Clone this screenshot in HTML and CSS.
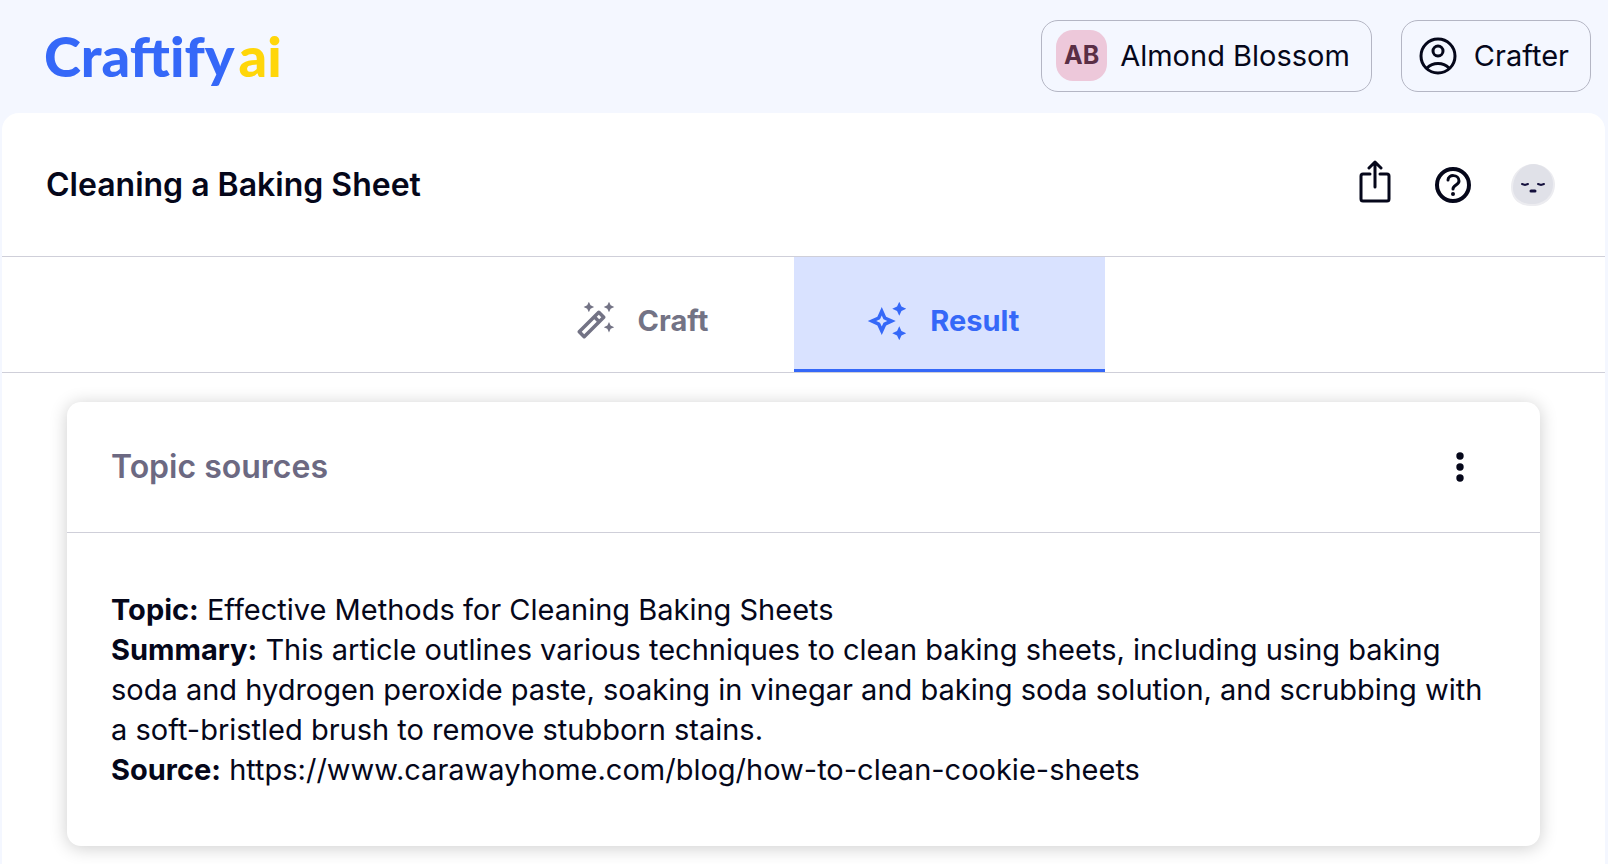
FILE: index.html
```html
<!DOCTYPE html>
<html lang="en">

<head>
<meta charset="UTF-8">
<meta name="viewport" content="width=device-width, initial-scale=1">
<title>Craftify ai</title>

<link rel="stylesheet" href="styles.css">

</head>

<body>

<header class="topbar">
    <a class="logo" href="#">Craftify<span class="logo-ai">ai</span></a>
    <div class="topbar-actions">
        <button class="chip" type="button">
            <span class="chip-badge">AB</span>
            <span>Almond Blossom</span>
        </button>
        <button class="chip chip-user" type="button">
            <svg class="chip-icon" viewBox="0 0 38 38" fill="none" stroke="currentColor" stroke-width="3">
                <circle cx="19" cy="19" r="17"/>
                <circle cx="19" cy="14" r="5"/>
                <path d="M8 31 C14 25 24 25 30 31"/>
            </svg>
            <span>Crafter</span>
        </button>
    </div>
</header>

<main class="panel">
    <div class="panel-head">
        <h1 class="title">Cleaning a Baking Sheet</h1>
        <div class="panel-tools">
            <button class="tool" type="button" aria-label="Share">
                <svg width="37" height="50" viewBox="0 0 37 50" fill="none" stroke="currentColor" stroke-width="3" stroke-linecap="round" stroke-linejoin="round">
                    <path d="M11 14 H4 Q2 14 2 16 V39 Q2 41 4 41 H28 Q30 41 30 39 V16 Q30 14 28 14 H21"/>
                    <path d="M16 27 V2 M10 8 L16 2 L22 8"/>
                </svg>
            </button>
            <button class="tool" type="button" aria-label="Help">
                <svg width="38" height="38" viewBox="0 0 38 38" fill="none" stroke="currentColor" stroke-width="4" stroke-linecap="round">
                    <circle cx="19" cy="19" r="16"/>
                    <path stroke-width="3" d="M14 14 C14 8 25 8 25 15 C25 19 19 19 19 23"/>
                    <circle cx="19" cy="28" r="2" fill="currentColor" stroke="none"/>
                </svg>
            </button>
            <button class="tool" type="button" aria-label="Account">
                <svg width="46" height="44" viewBox="0 0 46 44" fill="none" stroke="#14103c" stroke-width="2" stroke-linecap="round">
                    <path fill="#ececf0" stroke="none" d="M22 1 C33 0 45 9 45 21 C45 35 34 44 21 43 C9 43 1 36 1 24 C1 12 10 2 22 1 Z"/>
                    <path fill="#e0e1e8" stroke="none" d="M24 1 C35 2 43 10 43 21 C43 33 34 41 22 41 C11 41 3 35 3 25 C3 12 12 1 24 1 Z"/>
                    <path d="M12 21 L15 22 L18 21 M28 21 L31 22 L34 21"/>
                    <path stroke-width="3" d="M21 28 H25"/>
                </svg>
            </button>
        </div>
    </div>

    <nav class="tabs">
        <a class="tab" href="#craft">
            <svg class="tab-icon" viewBox="0 0 24 24" fill="currentColor">
                <path d="M20 7l.94-2.06L23 4l-2.06-.94L20 1l-.94 2.06L17 4l2.06.94zM8.5 7l.94-2.06L11.5 4l-2.06-.94L8.5 1l-.94 2.06L5.5 4l2.06.94zM20 12.5l-.94 2.06-2.06.94 2.06.94.94 2.06.94-2.06L23 15.5l-2.06-.94zm-2.29-3.38-2.83-2.83c-.2-.19-.45-.29-.71-.29-.26 0-.51.1-.71.29L2.29 17.46c-.39.39-.39 1.02 0 1.41l2.83 2.83c.2.2.45.3.71.3s.51-.1.71-.29l11.17-11.17c.39-.39.39-1.03 0-1.42zm-3.54-.7 1.41 1.41L14.41 11 13 9.59l1.17-1.17zM5.83 19.59l-1.41-1.41L11.59 11 13 12.41l-7.17 7.18z"/>
            </svg>
            Craft
        </a>
        <a class="tab active" href="#result" aria-current="page">
            <svg class="tab-icon" viewBox="0 0 24 24" fill="currentColor">
                <path d="M19 9l1.25-2.75L23 5l-2.75-1.25L19 1l-1.25 2.75L15 5l2.75 1.25zM19 15l-1.25 2.75L15 19l2.75 1.25L19 23l1.25-2.75L23 19l-2.75-1.25zM11.5 9.5L9 4 6.5 9.5 1 12l5.5 2.5L9 20l2.5-5.5L17 12zm-1.51 3.49L9 15.17l-.99-2.18L5.83 12l2.18-.99L9 8.83l.99 2.18 2.18.99z"/>
            </svg>
            Result
        </a>
    </nav>

    <section class="card">
        <div class="card-head">
            <h2 class="card-title">Topic sources</h2>
            <button class="more" type="button" aria-label="More">
                <svg width="8" height="32" viewBox="0 0 8 32" fill="currentColor">
                    <circle cx="4" cy="5" r="3.7"/>
                    <circle cx="4" cy="16" r="3.7"/>
                    <circle cx="4" cy="27" r="3.7"/>
                </svg>
            </button>
        </div>
        <div class="card-body">
            <p><b>Topic:</b> Effective Methods for Cleaning Baking Sheets</p>
            <p><b>Summary:</b> This article outlines various techniques to clean baking sheets, including using baking soda and hydrogen peroxide paste, soaking in vinegar and baking soda solution, and scrubbing with a soft-bristled brush to remove stubborn stains.</p>
            <p><b>Source:</b> https://www.carawayhome.com/blog/how-to-clean-cookie-sheets</p>
        </div>
    </section>
</main>

</body>
</html>
```
FILE: styles.css
```css
* {
    box-sizing: border-box;
}

body {
    display: flex;
    flex-direction: column;
    min-height: 100vh;
    margin: 0;
    background-color: #f4f7ff;
    color: #05071a;
    font-family: Inter, "Liberation Sans", sans-serif;
    font-size: 29px;
    line-height: 40px;
}

button {
    font: inherit;
    color: inherit;
    background: none;
    border: none;
    padding: 0;
    cursor: pointer;
}

svg {
    display: block;
    flex: none;
}

/* top bar */
.topbar {
    display: flex;
    align-items: center;
    justify-content: space-between;
    height: 113px;
    padding: 0 17px 2px 44px;
}

.logo {
    display: flex;
    gap: 4px;
    color: #3568f8;
    font-family: Lato, sans-serif;
    font-size: 56px;
    font-weight: 900;
    line-height: 64px;
    text-decoration: none;
}

.logo-ai {
    color: #ffd60a;
}

.topbar-actions {
    display: flex;
    gap: 29px;
}

.chip {
    display: flex;
    align-items: center;
    gap: 13px;
    height: 72px;
    padding: 0 21px 0 14px;
    border: 1px solid #b4b6c4;
    border-radius: 17px;
}

.chip-user {
    gap: 17px;
    padding-left: 17px;
}

.chip-badge {
    width: 51px;
    height: 51px;
    border-radius: 17px;
    background-color: #edc8da;
    color: #5a2e45;
    font-size: 25px;
    font-weight: 700;
    line-height: 51px;
    text-align: center;
}

.chip-icon {
    width: 38px;
    height: 38px;
}

/* main panel */
.panel {
    flex: 1;
    margin: 0 3px 0 2px;
    padding-bottom: 18px;
    background-color: #fff;
    border-radius: 17px 17px 0 0;
}

.panel-head {
    display: flex;
    align-items: center;
    justify-content: space-between;
    height: 144px;
    padding: 0 49px 0 44px;
    border-bottom: 1px solid #cfcfd9;
}

.title {
    margin: 0;
    font-size: 32px;
    font-weight: 600;
}

.panel-tools {
    display: flex;
    align-items: center;
    gap: 38px;
}

.tabs {
    display: flex;
    justify-content: center;
    border-bottom: 1px solid #cfcfd9;
}

.tab {
    display: flex;
    align-items: center;
    gap: 22px;
    padding: 43px 86px 27px 72px;
    border-bottom: 3px solid transparent;
    color: #737385;
    font-weight: 700;
    text-decoration: none;
}

.tab.active {
    background-color: #d9e2ff;
    border-bottom-color: #3568f8;
    color: #3568f8;
}

.tab-icon {
    width: 42px;
    height: 42px;
}

/* card */
.card {
    margin: 29px 65px 0;
    border-radius: 14px;
    background-color: #fff;
    box-shadow: 0 2px 18px rgba(0, 0, 0, 0.2);
}

.card-head {
    display: flex;
    align-items: center;
    justify-content: space-between;
    height: 131px;
    padding: 0 76px 0 44px;
    border-bottom: 1px solid #cfcfd9;
}

.card-title {
    margin: 0;
    color: #6c6982;
    font-size: 32px;
    font-weight: 600;
}

.card-body {
    padding: 57px 44px 56px;
}

.card-body p {
    margin: 0;
}
```
